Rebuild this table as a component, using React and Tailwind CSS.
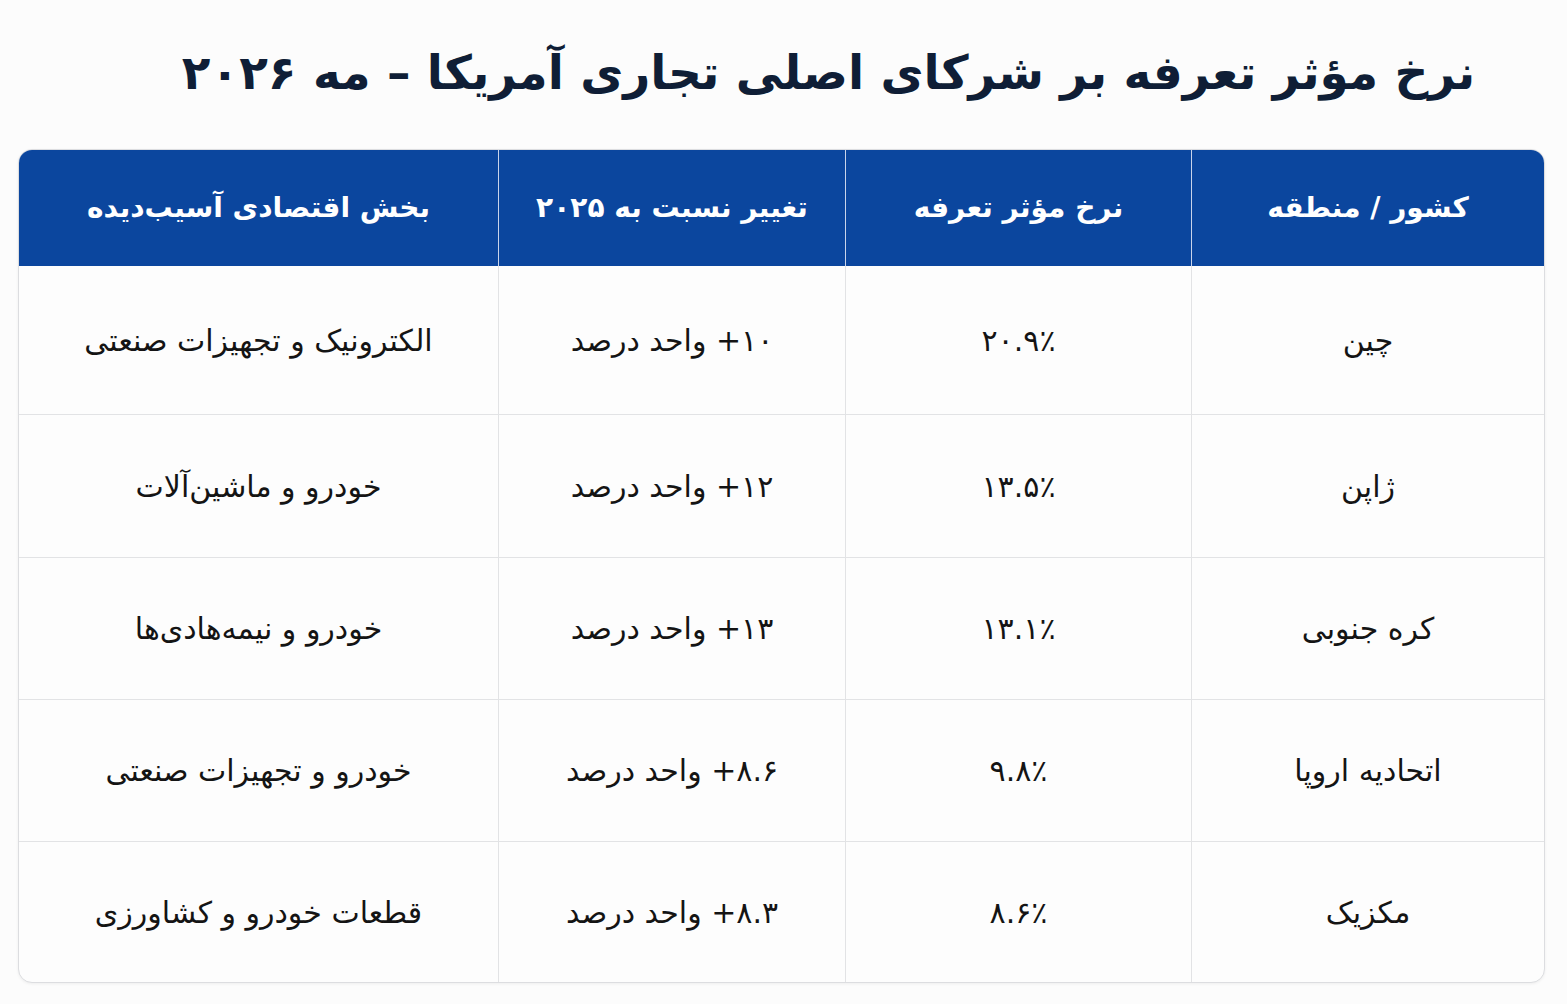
import React from "react";

const rows = [
  { h: "h-[148px]", c: ["چین", "۲۰.۹٪", "۱۰+ واحد درصد", "الکترونیک و تجهیزات صنعتی"] },
  { h: "h-[143px]", c: ["ژاپن", "۱۳.۵٪", "۱۲+ واحد درصد", "خودرو و ماشین‌آلات"] },
  { h: "h-[142px]", c: ["کره جنوبی", "۱۳.۱٪", "۱۳+ واحد درصد", "خودرو و نیمه‌هادی‌ها"] },
  { h: "h-[142px]", c: ["اتحادیه اروپا", "۹.۸٪", "۸.۶+ واحد درصد", "خودرو و تجهیزات صنعتی"] },
  { h: "h-[141px]", c: ["مکزیک", "۸.۶٪", "۸.۳+ واحد درصد", "قطعات خودرو و کشاورزی"] },
];

const headers = ["کشور / منطقه", "نرخ مؤثر تعرفه", "تغییر نسبت به ۲۰۲۵", "بخش اقتصادی آسیب‌دیده"];

export default function App() {
  return (
    <div dir="rtl" className="w-[1567px] h-[1004px] bg-[#fcfcfc] font-['DejaVu_Sans',sans-serif] overflow-hidden">
      <div className="h-[149px] flex items-center justify-center pb-[4px] pl-[90px]">
        <h1 className="text-[47px] font-bold text-[#0f1e36] leading-none">
          نرخ مؤثر تعرفه بر شرکای اصلی تجاری آمریکا – مه ۲۰۲۶
        </h1>
      </div>
      <div className="mr-[22px] ml-[18px] w-[1527px] rounded-[14px] border border-[#dcdde0] overflow-hidden bg-[#fdfdfd] shadow-[0_1px_3px_rgba(0,0,0,0.06)]">
        <div className="grid grid-cols-[353px_346px_347px_1fr] h-[116px] bg-[#0b469e]">
          {headers.map((t, i) => (
            <div
              key={i}
              className={`flex items-center justify-center text-white font-bold text-[28px] ${i < 3 ? "border-l border-[#c9d4ea]" : ""}`}
            >
              {t}
            </div>
          ))}
        </div>
        {rows.map((r, ri) => (
          <div
            key={ri}
            className={`grid grid-cols-[353px_346px_347px_1fr] ${r.h} ${ri > 0 ? "border-t border-[#e2e3e5]" : ""}`}
          >
            {r.c.map((t, i) => (
              <div
                key={i}
                className={`flex items-center justify-center text-[#141414] text-[30px] ${i < 3 ? "border-l border-[#e2e3e5]" : ""}`}
              >
                {t}
              </div>
            ))}
          </div>
        ))}
      </div>
    </div>
  );
}
